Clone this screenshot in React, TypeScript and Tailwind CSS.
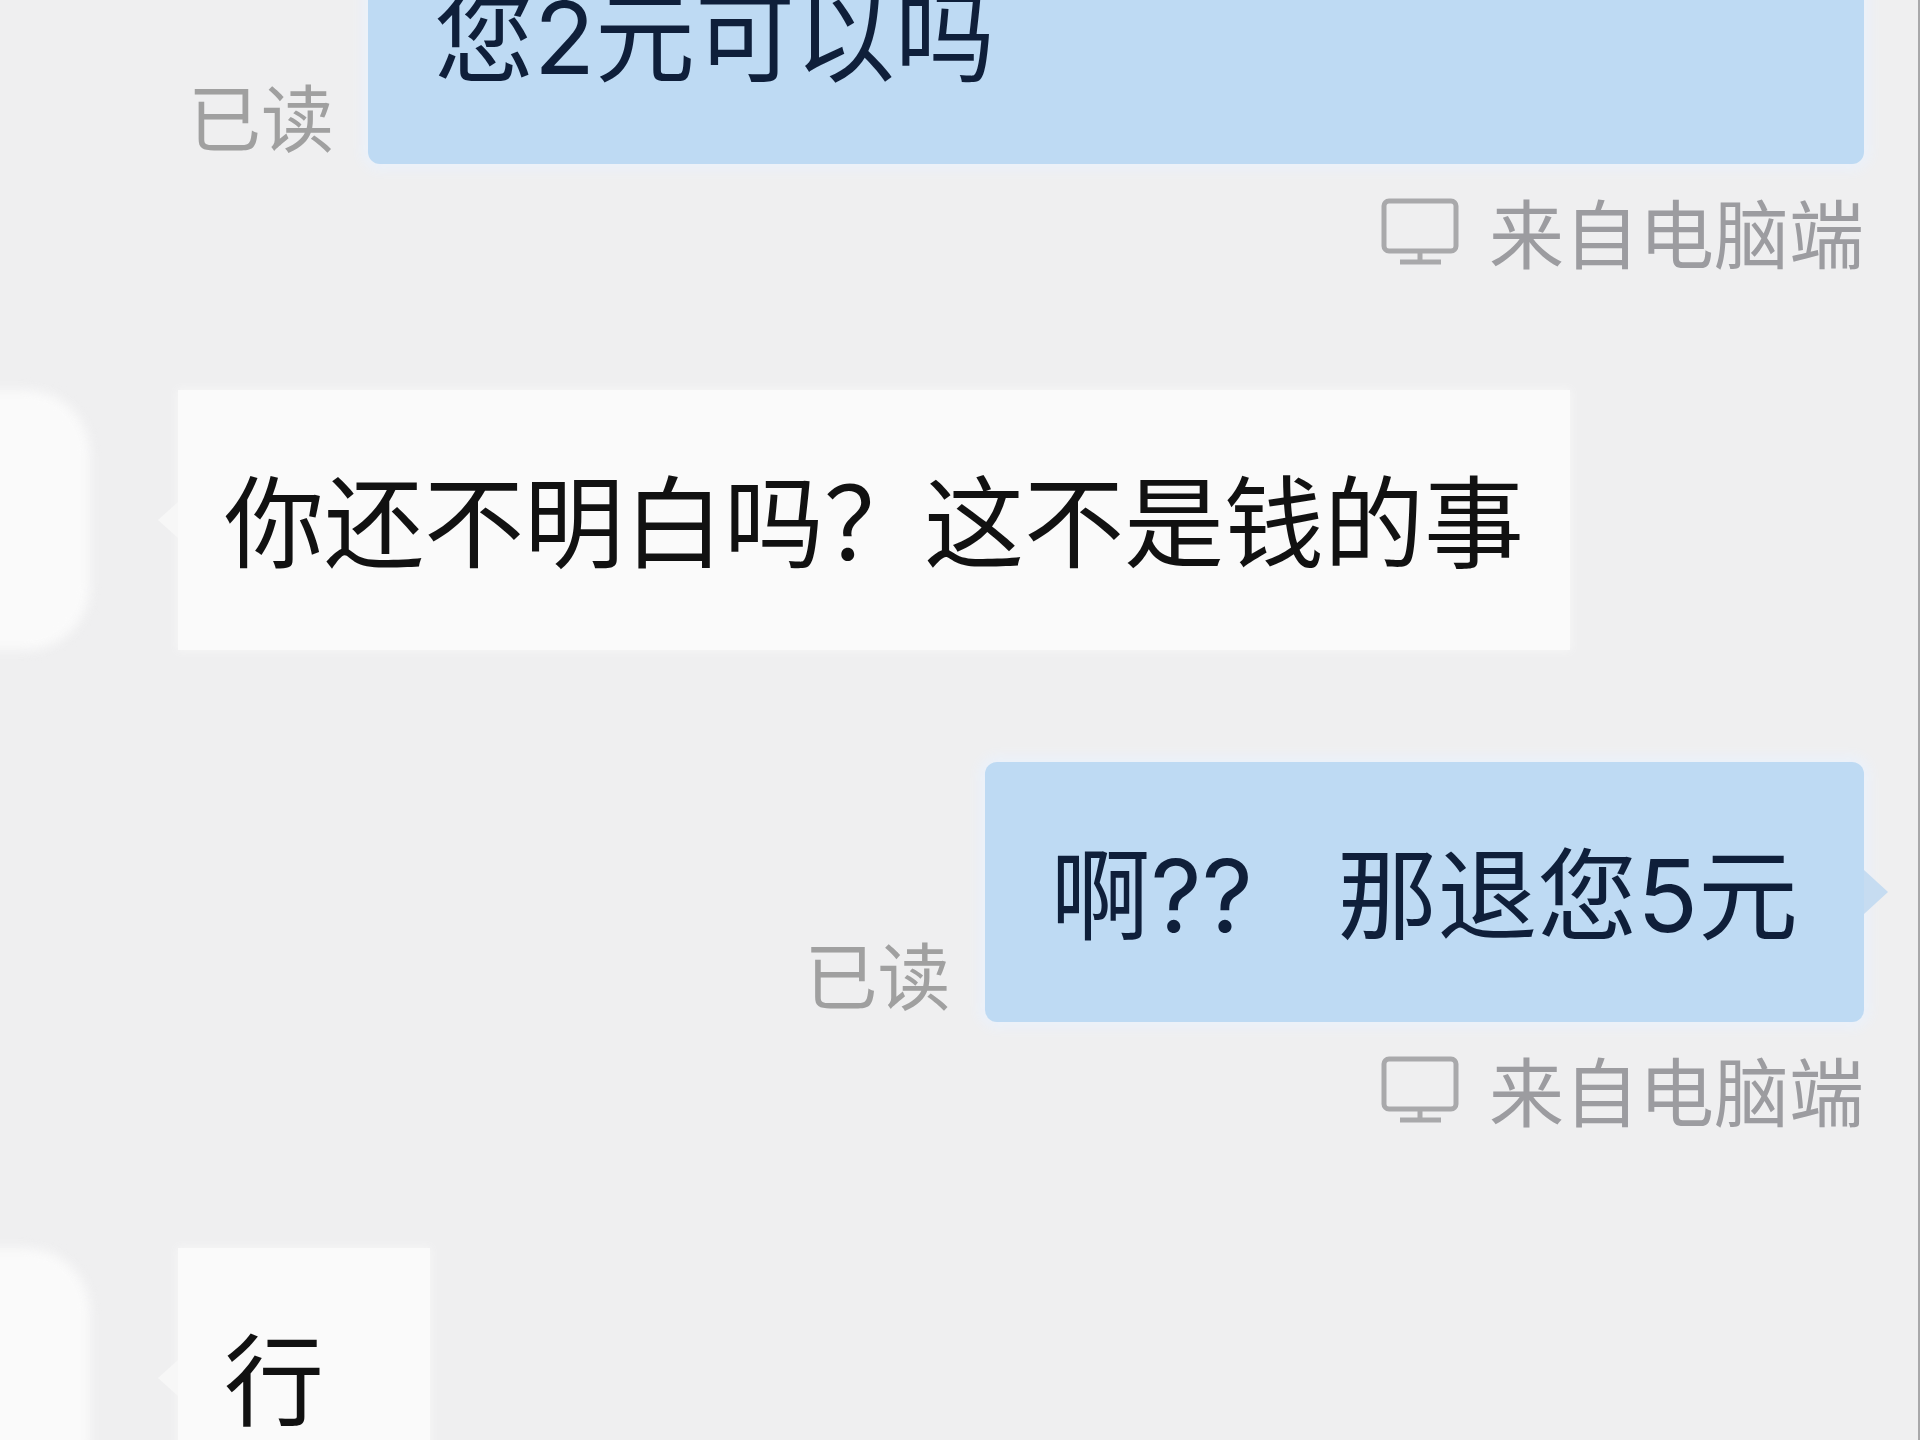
import { ReactNode } from "react";

interface Message {
  id: number;
  mine: boolean;
  text: string;
  long?: boolean;
}

const messages: Message[] = [
  { id: 1, mine: true, text: "您2元可以吗", long: true },
  { id: 2, mine: false, text: "你还不明白吗？这不是钱的事" },
  { id: 3, mine: true, text: "啊??   那退您5元" },
  { id: 4, mine: false, text: "行" },
];

function MonitorIcon() {
  return (
    <svg
      viewBox="0 0 78 68"
      className="w-[78px] h-[68px] shrink-0"
      fill="none"
      stroke="#a9a9ab"
      strokeWidth="5"
      aria-hidden="true"
    >
      <rect x="3" y="3" width="72" height="50" rx="5" />
      <path d="M39 53v11M19 64h41" />
    </svg>
  );
}

function Source() {
  return (
    <div className="flex items-center justify-end gap-[30px] pt-[22px] text-[75px] leading-[84px] text-[#9c9ca0]">
      <MonitorIcon />
      <span className="pt-2">来自电脑端</span>
    </div>
  );
}

function SentMessage({ children, long }: { children: ReactNode; long?: boolean }) {
  return (
    <article className="pl-[188px] pr-[54px]">
      <div className="flex items-end justify-end gap-[34px]">
        <span className="text-[73px] leading-[88px] text-[#a0a0a0] shrink-0">已读</span>
        <div
          className={`relative rounded-xl bg-[#bedaf3] px-[66px] pt-16 pb-14 shadow-[0_0_12px_6px_#ebf1fa] ${
            long ? "flex-1" : ""
          }`}
        >
          <p className="text-[100px] leading-[140px] whitespace-pre text-[#0f1f3a]">{children}</p>
          {!long && (
            <svg viewBox="0 0 24 44" className="absolute left-full top-1/2 -translate-y-1/2 w-6 h-11">
              <path d="M0 0L24 22L0 44Z" fill="#c6dcf1" />
            </svg>
          )}
        </div>
      </div>
      <Source />
    </article>
  );
}

function ReceivedMessage({ children }: { children: ReactNode }) {
  return (
    <article className="flex items-start">
      {/* avatar, its left half is off screen */}
      <div className="-ml-8 w-[122px] h-[260px] shrink-0 rounded-r-[64px] bg-[#fafafa] blur-[6px]" />
      <div className="relative ml-[88px] min-w-[252px] bg-[#fafafa] px-[46px] pt-16 pb-14 shadow-[0_0_8px_1px_#f6f6f6]">
        <svg viewBox="0 0 20 36" className="absolute right-full top-1/2 -translate-y-1/2 w-5 h-9">
          <path d="M20 0L0 18L20 36Z" fill="#f7f7f7" />
        </svg>
        <p className="text-[100px] leading-[140px] whitespace-pre text-[#111111]">{children}</p>
      </div>
    </article>
  );
}

export default function App() {
  return (
    <div className="h-screen overflow-hidden border-r-2 border-[#a8a8aa] bg-[#efeff0] font-[Inter,'Noto_Sans_CJK_SC',sans-serif]">
      {/* scrolled so the first bubble is cut off at the top */}
      <main className="-mt-24 flex flex-col gap-28">
        {messages.map((m) =>
          m.mine ? (
            <SentMessage key={m.id} long={m.long}>
              {m.text}
            </SentMessage>
          ) : (
            <ReceivedMessage key={m.id}>{m.text}</ReceivedMessage>
          )
        )}
      </main>
    </div>
  );
}
